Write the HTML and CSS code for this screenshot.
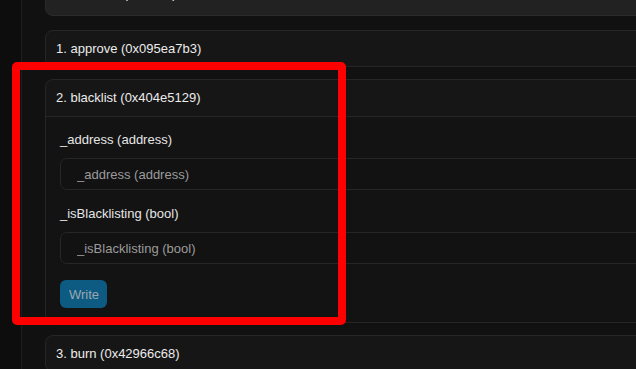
FILE: index.html
```html
<!DOCTYPE html>
<html>
<head>
    <link rel="stylesheet" href="styles.css">
</head>
<body>
    <div class="layout">
        <div class="sidebar"></div>
        <div class="main">
            <div class="topcard">
                <span class="topicon"></span>
                <span class="toptext">Compiler output from the verified source</span>
                <a class="toplink">Read more</a>
            </div>

            <div class="card first">
                <div class="card-head">1. approve (0x095ea7b3)</div>
            </div>

            <div class="card open">
                <div class="card-head">2. blacklist (0x404e5129)</div>
                <div class="card-body">
                    <div class="field">
                        <label class="field-label">_address (address)</label>
                        <input class="field-input" type="text" placeholder="_address (address)">
                    </div>
                    <div class="field">
                        <label class="field-label">_isBlacklisting (bool)</label>
                        <input class="field-input" type="text" placeholder="_isBlacklisting (bool)">
                    </div>
                    <button class="btn-write">Write</button>
                </div>
            </div>

            <div class="card">
                <div class="card-head">3. burn (0x42966c68)</div>
            </div>
        </div>
    </div>

    <!-- annotation drawn over the page -->
    <div class="highlight"></div>
</body>
</html>
```

FILE: styles.css
```css
html, body {
    margin: 0;
    height: 100%;
}
body {
    background: #111111;
    color: #e4e4e4;
    font-family: "Liberation Sans", Arial, sans-serif;
    font-size: 13px;
    overflow: hidden;
}
.layout {
    display: flex;
    height: 100%;
}
.sidebar {
    width: 21px;
    flex: none;
    background: #0d0d0d;
    border-right: 1px solid #1e1e1e;
}
.main {
    flex: none;
    width: 720px;
    padding-left: 23px;
    display: flex;
    flex-direction: column;
}
.main > * {
    flex: none;
}

/* card cut off by the top of the window */
.topcard {
    margin-top: -21px;
    height: 37px;
    box-sizing: border-box;
    background: #222222;
    border: 1px solid #2b2b2b;
    border-radius: 8px;
    display: flex;
    align-items: center;
    padding: 0 11px;
}
.topicon {
    width: 11px;
    height: 11px;
    border-radius: 50%;
    background: #e8e8e8;
    margin-right: 30px;
    position: relative;
    top: -3px;
}
.toptext {
    color: #e4e4e4;
    position: relative;
    top: -4px;
}
.toplink {
    color: #2f8fe6;
    margin-left: 130px;
    position: relative;
    top: -4px;
}

.card {
    background: #161616;
    border: 1px solid #262626;
    border-radius: 8px;
    margin-top: 12px;
}
.card.first {
    margin-top: 14px;
}
.card-head {
    height: 35px;
    line-height: 35px;
    padding: 0 10px;
    color: #ececec;
}
.card.open .card-head {
    height: 36px;
    line-height: 36px;
    border-bottom: 1px solid #262626;
}
.card-body {
    background: #131313;
    border-radius: 0 0 8px 8px;
    padding: 15px 14px 14px;
    display: flex;
    flex-direction: column;
    align-items: flex-start;
}
.field {
    display: flex;
    flex-direction: column;
    align-self: stretch;
    margin-bottom: 16px;
}
.field-label {
    line-height: 16px;
    margin-bottom: 10px;
    color: #e6e6e6;
}
.field-input {
    height: 32px;
    box-sizing: border-box;
    background: #121212;
    border: 1px solid #262626;
    border-radius: 7px;
    padding: 0 16px;
    font-family: "Liberation Sans", Arial, sans-serif;
    font-size: 13px;
    color: #cfcfcf;
    outline: none;
}
.field-input::placeholder {
    color: #9b9b9b;
}
.btn-write {
    height: 28px;
    padding: 0 8px 0 9px;
    background: #0d5b83;
    border: none;
    border-radius: 6px;
    color: #9aa7b0;
    font-family: "Liberation Sans", Arial, sans-serif;
    font-size: 13px;
}

.highlight {
    position: absolute;
    left: 12px;
    top: 62px;
    width: 334px;
    height: 263px;
    box-sizing: border-box;
    border: 8px solid #ff0000;
    border-radius: 5px;
}
```
